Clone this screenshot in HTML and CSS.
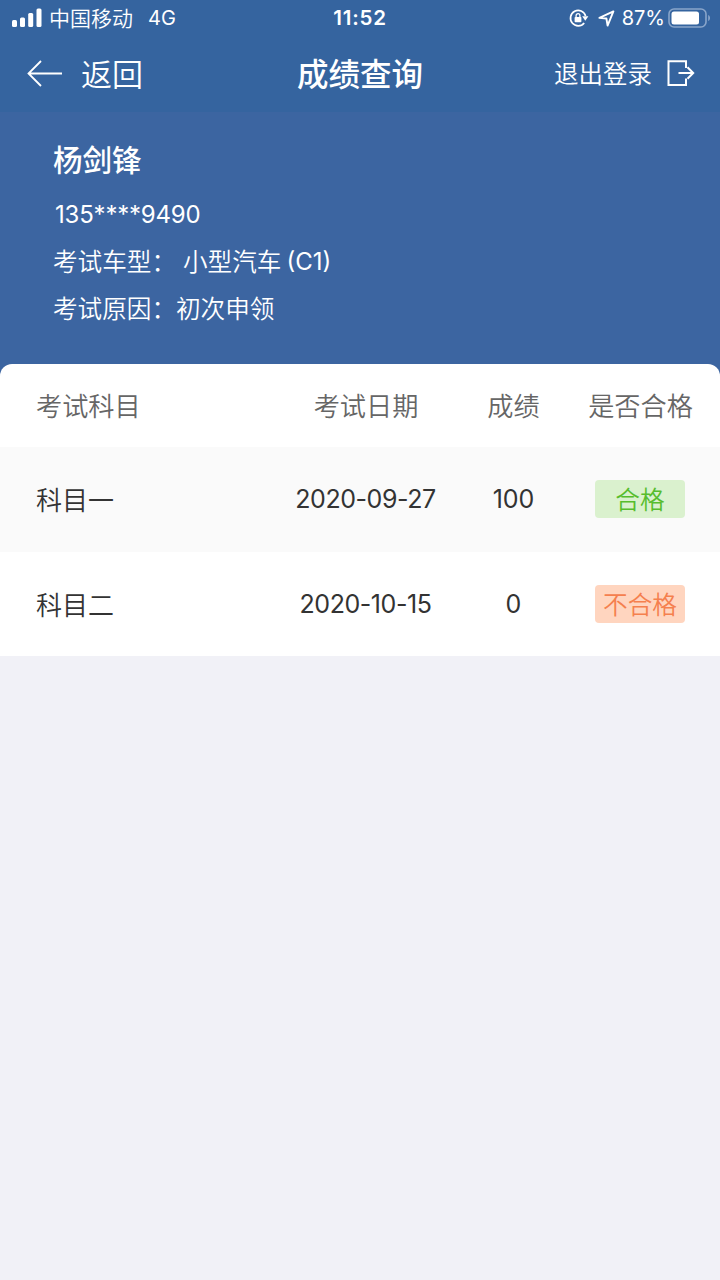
FILE: index.html
```html
<!DOCTYPE html>
<html lang="zh-CN">
  <head>
    <meta charset="UTF-8" />
    <meta name="viewport" content="width=device-width, initial-scale=1.0" />
    <title>成绩查询</title>
    <link rel="stylesheet" href="styles.css">
  </head>
  <body>
    <header class="top">
      <div class="status-bar">
        <div class="status-left">
          <svg class="signal" width="30" height="20" viewBox="0 0 30 20" fill="#fff">
            <rect x="0" y="12" width="5" height="7" rx="1.5" />
            <rect x="8" y="9.5" width="5" height="9.5" rx="1.5" />
            <rect x="16.2" y="5" width="5" height="14" rx="1.5" />
            <rect x="24.5" y="0.5" width="5" height="18.5" rx="1.5" />
          </svg>
          <span class="carrier">中国移动</span>
          <span class="network">4G</span>
        </div>
        <span class="clock">11:52</span>
        <div class="status-right">
          <svg class="lock" width="20" height="20" viewBox="0 0 20 20" fill="none" stroke="#fff" stroke-width="1.7">
            <path d="M16.6 8A7.7 7.7 0 1 0 15.2 15" />
            <path d="M13.2 8.3h6.2l-3.1 4.4z" fill="#fff" stroke="none" />
            <rect x="5.6" y="9" width="6.8" height="5.2" rx="0.8" fill="#fff" stroke="none" />
            <path d="M7.1 9.2V7.6a1.9 1.9 0 0 1 3.8 0V9.2" stroke-width="1.3" />
          </svg>
          <svg class="location" width="17" height="17" viewBox="0 0 17 17" fill="none" stroke="#fff" stroke-width="1.9" stroke-linejoin="round">
            <path d="M15.4 1.4L1.4 7.9L8.4 8.5L9.6 15.6Z" />
          </svg>
          <span class="percent">87%</span>
          <svg class="battery" width="43" height="20" viewBox="0 0 43 20">
            <rect x="1" y="1" width="37" height="18" rx="5" fill="none" stroke="#89a5ca" stroke-width="1.6" />
            <rect x="3.5" y="3.5" width="27.5" height="13" rx="2.5" fill="#fff" />
            <path d="M40.2 7c2.4 1 2.4 5 0 6z" fill="#89a5ca" />
          </svg>
        </div>
      </div>
      <nav class="nav-bar">
        <a class="back">
          <svg width="36" height="28" viewBox="0 0 36 28" fill="none" stroke="#fff" stroke-width="1.8">
            <path d="M35 13.5H1.5M14 1L1.5 13.5L14 26" />
          </svg>
          <span>返回</span>
        </a>
        <h1 class="nav-title">成绩查询</h1>
        <a class="logout">
          <span>退出登录</span>
          <svg width="28" height="28" viewBox="0 0 28 28" fill="none" stroke="#fff" stroke-width="2">
            <path d="M19 8V1.2H1.5V25H19V18.5" />
            <path d="M11.5 13H26M20.5 7.3L26.2 13L20.5 18.7" />
          </svg>
        </a>
      </nav>
    </header>

    <section class="profile">
      <h2 class="name">杨剑锋</h2>
      <p class="phone">135****9490</p>
      <p class="field"><span>考试车型：</span><span class="car-type">小型汽车</span><span class="car-code">(C1)</span></p>
      <p class="field"><span>考试原因：</span><span>初次申领</span></p>
    </section>

    <main class="scores">
      <div class="row head">
        <span>考试科目</span>
        <span>考试日期</span>
        <span>成绩</span>
        <span>是否合格</span>
      </div>
      <div class="row odd">
        <span>科目一</span>
        <span class="date">2020-09-27</span>
        <span class="score">100</span>
        <span class="result"><em class="tag pass">合格</em></span>
      </div>
      <div class="row">
        <span>科目二</span>
        <span class="date">2020-10-15</span>
        <span class="score">0</span>
        <span class="result"><em class="tag fail">不合格</em></span>
      </div>
    </main>
  </body>
</html>
```

FILE: styles.css
```css
* {
  box-sizing: border-box;
}
body {
  margin: 0;
  min-height: 1280px;
  background: #f1f1f7;
  font-family: "Noto Sans CJK SC", sans-serif;
  font-weight: 350;
  color: #333;
}
h1,
h2,
p {
  margin: 0;
}
.top {
  background: #35649f;
  color: #fff;
}
.status-bar {
  display: grid;
  grid-template-columns: 1fr auto 1fr;
  align-items: center;
  height: 36px;
  padding: 0 9px 0 12px;
  font-size: 20px;
  line-height: 36px;
}
.status-left,
.status-right {
  display: flex;
  align-items: center;
}
.status-right {
  justify-content: flex-end;
}
.carrier {
  margin-left: 7px;
  padding-bottom: 2px;
  font-size: 21px;
  line-height: 34px;
}
.network,
.clock,
.percent,
.phone,
.car-code,
.date,
.score {
  font-family: Inter, "Noto Sans CJK SC", sans-serif;
  font-weight: 400;
}
.network {
  margin-left: 15px;
}
.clock {
  margin-right: 3px;
  font-size: 20.5px;
  font-weight: 600;
  letter-spacing: 0.8px;
}
.location {
  margin-left: 9px;
}
.percent {
  margin-left: 7px;
}
.battery {
  margin-left: 3px;
}
.nav-bar {
  display: grid;
  grid-template-columns: 1fr auto 1fr;
  align-items: center;
  height: 76px;
  padding: 0 25px 3px 27px;
  line-height: 73px;
}
.back,
.logout {
  display: flex;
  align-items: center;
}
.back {
  gap: 18px;
  font-size: 31px;
}
.nav-title {
  margin-right: 2px;
  font-size: 31.5px;
  font-weight: 500;
}
.logout {
  justify-content: flex-end;
  gap: 15px;
  font-size: 24.5px;
}
.back svg,
.logout svg {
  margin-top: 2px;
}
.profile {
  height: 268px;
  padding: 25px 53px 0;
  background: #3c65a1;
  color: #fff;
}
.name {
  height: 42px;
  font-size: 29.5px;
  font-weight: 500;
  line-height: 42px;
}
.phone {
  height: 47px;
  margin-top: 12px;
  padding-left: 2px;
  font-size: 24px;
  letter-spacing: -0.2px;
  line-height: 47px;
}
.field {
  display: flex;
  height: 47px;
  font-size: 24.6px;
  line-height: 45px;
}
.car-type {
  margin-left: 7px;
}
.car-code {
  margin-left: 5px;
  font-size: 24px;
  line-height: 47px;
}
.scores {
  margin-top: -16px;
  overflow: hidden;
  border-radius: 12px 12px 0 0;
  background: #fff;
}
.row {
  display: grid;
  grid-template-columns: 250px 160px 135px 119px;
  align-items: center;
  height: 104px;
  padding: 0 20px 2px 36px;
  font-size: 26px;
  text-align: center;
}
.row > :first-child {
  text-align: left;
}
.head {
  height: 83px;
  font-size: 26.2px;
  color: #666;
}
.odd {
  height: 105px;
  background: #fafafa;
}
.date,
.score {
  padding-top: 1px;
  font-size: 25px;
}
.date {
  margin-left: -1px;
  letter-spacing: -0.45px;
}
.result {
  display: flex;
  justify-content: center;
}
.tag {
  width: 90px;
  height: 38px;
  margin: 1px 1px 0 0;
  border-radius: 4px;
  font-size: 24.7px;
  font-style: normal;
  line-height: 36px;
}
.pass {
  background: #daf1ce;
  color: #57bd2d;
}
.fail {
  background: #ffd5bf;
  color: #f5804e;
}
```
